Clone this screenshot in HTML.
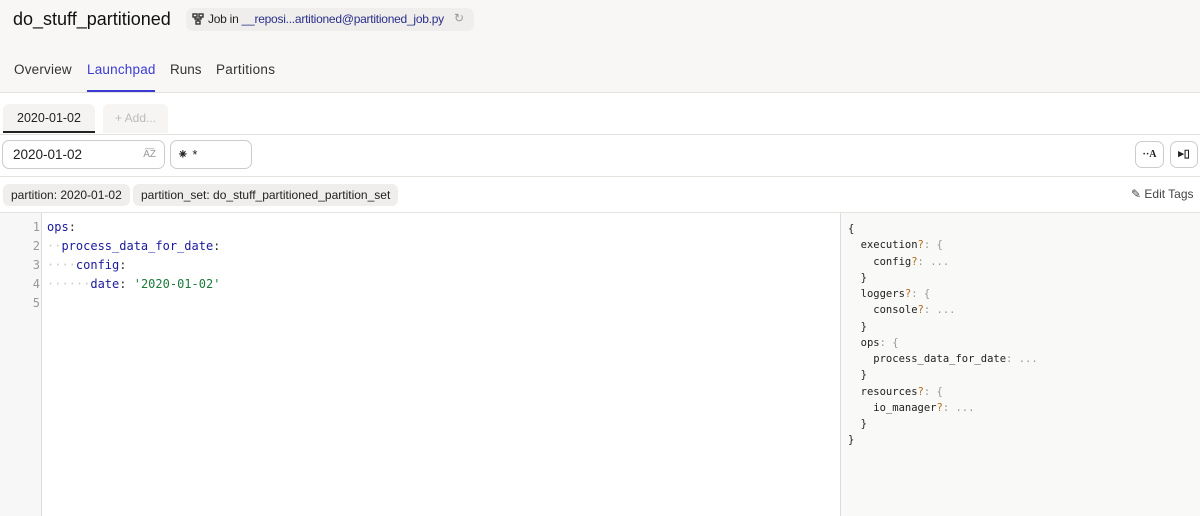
<!DOCTYPE html>
<html><head><style>
*{box-sizing:border-box;margin:0;padding:0}
body{width:1200px;height:516px;overflow:hidden;background:#fff;font-family:"Liberation Sans",sans-serif;color:#222;position:relative}
.abs{position:absolute}
.hdr{left:0;top:0;width:1200px;height:93px;background:#f8f7f6;border-bottom:1px solid #e4e2df}
.mono{font-family:"DejaVu Sans Mono","Liberation Mono",monospace}
.tag{background:#efeeec;border-radius:6px;height:22px;font-size:12px;line-height:22px;padding:0 8px;top:184px;color:#222}
.btn{border:1px solid #ccc;border-radius:7px;background:#fff}
.code div{height:19px;line-height:19px;font-size:12px;white-space:pre}
.rp div{height:16.25px;line-height:16.25px;font-size:10.5px;white-space:pre;color:#222}
.q{color:#b36b1a}.g{color:#999}
</style></head><body>
<div class="abs hdr"></div>
<div class="abs" style="left:13px;top:9px;font-size:18px;color:#111">do_stuff_partitioned</div>
<div class="abs" style="left:186px;top:8px;width:288px;height:23px;background:#efeeec;border-radius:7px"></div>
<svg class="abs" style="left:192px;top:13px" width="12" height="12" viewBox="0 0 12 12" fill="none" stroke="#333" stroke-width="1.4"><rect x="1" y="1" width="4" height="3"/><rect x="7" y="1" width="4" height="3"/><rect x="4" y="8" width="4" height="3"/><path d="M3 4v2h6V4M6 6v2"/></svg>
<div class="abs" style="left:208px;top:12px;font-size:12px;color:#222;letter-spacing:-0.25px">Job in <span style="color:#2a2f88">__reposi...artitioned@partitioned_job.py</span></div>
<div class="abs" style="left:454px;top:11px;font-size:12px;color:#999">↻</div>
<div class="abs" style="left:14px;top:62px;font-size:13.5px;color:#333;letter-spacing:0.2px">Overview</div>
<div class="abs" style="left:87px;top:62px;font-size:13.5px;color:#3b3bd4;letter-spacing:0.2px">Launchpad</div>
<div class="abs" style="left:87px;top:90px;width:68px;height:2px;background:#3b3bd4"></div>
<div class="abs" style="left:170px;top:62px;font-size:13.5px;color:#333">Runs</div>
<div class="abs" style="left:216px;top:62px;font-size:13.5px;color:#333;letter-spacing:0.3px">Partitions</div>
<div class="abs" style="left:3px;top:104px;width:92px;height:29px;background:#f4f3f2;border-radius:6px 6px 0 0;border-bottom:2px solid #222;font-size:12.5px;text-align:center;line-height:28px">2020-01-02</div>
<div class="abs" style="left:103px;top:104px;width:65px;height:29px;background:#f6f5f4;border-radius:6px 6px 0 0;font-size:12px;color:#bbb;text-align:center;line-height:28px">+ Add...</div>
<div class="abs" style="left:0;top:134px;width:1200px;height:1px;background:#e4e2df"></div>
<div class="abs btn" style="left:2px;top:140px;width:163px;height:29px;font-size:13.5px;line-height:27px;padding-left:10px">2020-01-02<span style="position:absolute;right:8px;font-size:10px;color:#999">A͞Z</span></div>
<div class="abs btn" style="left:170px;top:140px;width:82px;height:29px;font-size:13px;line-height:27px;padding-left:6px"><span style="font-size:14px">⁕</span> *</div>
<div class="abs btn" style="left:1135px;top:141px;width:29px;height:27px;font-size:10px;font-weight:bold;text-align:center;line-height:25px;font-family:'Liberation Serif',serif">··A</div>
<div class="abs btn" style="left:1170px;top:141px;width:28px;height:27px;font-size:11px;font-weight:bold;text-align:center;line-height:25px">▸▯</div>
<div class="abs" style="left:0;top:176px;width:1200px;height:1px;background:#e4e2df"></div>
<div class="abs tag" style="left:3px">partition: 2020-01-02</div>
<div class="abs tag" style="left:133px">partition_set: do_stuff_partitioned_partition_set</div>
<div class="abs" style="left:1131px;top:187px;font-size:12px;color:#444">✎ Edit Tags</div>
<div class="abs" style="left:0;top:212px;width:1200px;height:1px;background:#e4e2df"></div>
<div class="abs" style="left:0;top:213px;width:42px;height:303px;background:#f7f7f7;border-right:1px solid #ddd"></div>
<div class="abs code mono" style="left:0;top:218px;width:40px;text-align:right;color:#999">
<div>1</div><div>2</div><div>3</div><div>4</div><div>5</div></div>
<div class="abs code mono" style="left:47px;top:218px;color:#1a1a9e">
<div>ops<span style="color:#333">:</span></div>
<div><span style="color:#ccc">··</span>process_data_for_date<span style="color:#333">:</span></div>
<div><span style="color:#ccc">····</span>config<span style="color:#333">:</span></div>
<div><span style="color:#ccc">······</span>date<span style="color:#333">:</span> <span style="color:#1b7a3a">'2020-01-02'</span></div>
<div></div></div>
<div class="abs" style="left:840px;top:213px;width:360px;height:303px;background:#f9f9f8;border-left:1px solid #ddd"></div>
<div class="abs rp mono" style="left:848px;top:221px">
<div class="g">{</div>
<div>  execution<span class="q">?</span><span class="g">: {</span></div>
<div>    config<span class="q">?</span><span class="g">: ...</span></div>
<div class="g">  }</div>
<div>  loggers<span class="q">?</span><span class="g">: {</span></div>
<div>    console<span class="q">?</span><span class="g">: ...</span></div>
<div class="g">  }</div>
<div>  ops<span class="g">: {</span></div>
<div>    process_data_for_date<span class="g">: ...</span></div>
<div class="g">  }</div>
<div>  resources<span class="q">?</span><span class="g">: {</span></div>
<div>    io_manager<span class="q">?</span><span class="g">: ...</span></div>
<div class="g">  }</div>
<div class="g">}</div>
</div>
</body></html>
